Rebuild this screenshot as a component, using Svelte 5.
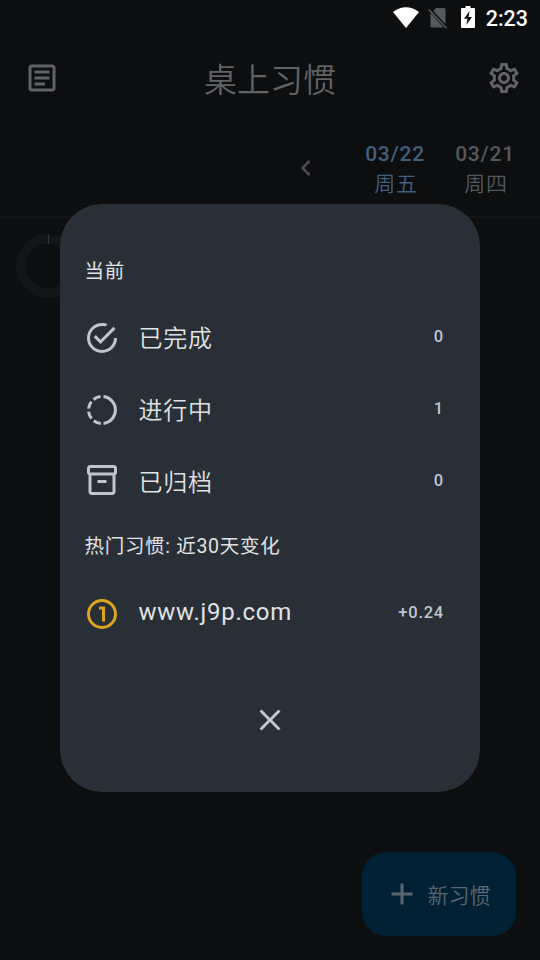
<script lang="ts">
  const days = [
    { date: '03/22', name: '周五', active: true },
    { date: '03/21', name: '周四', active: false },
  ];

  const stats = [
    { icon: 'done', label: '已完成', value: 0 },
    { icon: 'progress', label: '进行中', value: 1 },
    { icon: 'archive', label: '已归档', value: 0 },
  ];
</script>

<div class="screen">
  <div class="statusbar">
    <svg class="wifi" width="26" height="21" viewBox="0 0 26 21"><path d="M0 5C7.500-1.500 18.500-1.500 26 5L13 21z" fill="currentColor"/></svg>
    <svg class="sim" width="20" height="22" viewBox="0 0 20 22">
      <path d="M8 1h8q1.500 0 1.500 1.500V17L5.300 4zM2.500 6L15.500 20.500H4q-1.500 0-1.500-1.500z" fill="#57585a"/>
      <path d="M.7 2.500L18.500 21.300" stroke="#57585a" stroke-width="1.600"/>
    </svg>
    <svg class="battery" width="14" height="22" viewBox="0 0 14 22">
      <path d="M4.500 0h5v2H13q1 0 1 1v18q0 1-1 1H1q-1 0-1-1V3q0-1 1-1h3.500z" fill="currentColor"/>
      <path d="M8.600 5L3 12.700h3.500L5.300 19 11 11H7.500z" fill="#0c0e10"/>
    </svg>
    <span class="time">2:23</span>
  </div>

  <header class="topbar">
    <svg class="icon" viewBox="0 0 24 24"><path d="M19 5v14H5V5h14m0-2H5c-1.100 0-2 .9-2 2v14c0 1.100.9 2 2 2h14c1.100 0 2-.9 2-2V5c0-1.100-.9-2-2-2zM14 17H7v-2h7v2zm3-4H7v-2h10v2zm0-4H7V7h10v2z" fill="currentColor"/></svg>
    <h1>桌上习惯</h1>
    <svg class="icon" viewBox="0 0 24 24"><path d="M19.430 12.980c.04-.32.07-.64.07-.98 0-.34-.03-.66-.07-.98l2.110-1.650c.19-.15.24-.42.12-.64l-2-3.460c-.09-.16-.26-.25-.43-.25-.06 0-.12.01-.17.03l-2.490 1c-.52-.4-1.080-.73-1.690-.98l-.38-2.650C14.460 2.180 14.250 2 14 2h-4c-.25 0-.46.18-.49.42l-.38 2.650c-.61.25-1.170.59-1.690.98l-2.490-1c-.06-.02-.12-.03-.18-.03-.17 0-.34.09-.43.25l-2 3.460c-.13.22-.07.49.12.64l2.110 1.650c-.04.32-.07.65-.07.98 0 .33.03.66.07.98l-2.110 1.650c-.19.15-.24.42-.12.64l2 3.460c.09.16.26.25.43.25.06 0 .12-.01.17-.03l2.490-1c.52.4 1.080.73 1.690.98l.38 2.650c.03.24.24.42.49.42h4c.25 0 .46-.18.49-.42l.38-2.650c.61-.25 1.170-.59 1.690-.98l2.490 1c.06.02.12.03.18.03.17 0 .34-.09.43-.25l2-3.460c.12-.22.07-.49-.12-.64l-2.110-1.650zm-1.980-1.710c.04.31.05.52.05.73 0 .21-.02.43-.05.73l-.14 1.130.89.7 1.080.84-.7 1.210-1.270-.51-1.040-.42-.9.68c-.43.32-.84.56-1.250.73l-1.060.43-.16 1.130-.2 1.350h-1.400l-.19-1.350-.16-1.130-1.060-.43c-.43-.18-.83-.41-1.230-.71l-.91-.7-1.060.43-1.270.51-.7-1.210 1.080-.84.89-.7-.14-1.130c-.03-.31-.05-.54-.05-.74s.02-.43.05-.73l.14-1.130-.89-.7-1.080-.84.7-1.210 1.270.51 1.040.42.9-.68c.43-.32.84-.56 1.250-.73l1.060-.43.16-1.130.2-1.350h1.390l.19 1.350.16 1.130 1.060.43c.43.18.83.41 1.230.71l.91.7 1.060-.43 1.270-.51.7 1.210-1.070.85-.89.7.14 1.130zM12 8c-2.210 0-4 1.790-4 4s1.790 4 4 4 4-1.790 4-4-1.790-4-4-4zm0 6c-1.100 0-2-.9-2-2s.9-2 2-2 2 .9 2 2-.9 2-2 2z" fill="currentColor"/></svg>
  </header>

  <div class="days">
    <svg class="prev" viewBox="0 0 24 24"><path d="M15.410 7.410L14 6l-6 6 6 6 1.410-1.410L10.830 12z" fill="currentColor"/></svg>
    {#each days as day}
      <div class="day" class:active={day.active}>
        <span class="date">{day.date}</span>
        <span class="name">{day.name}</span>
      </div>
    {/each}
  </div>

  <main>
    <svg width="64" height="64" viewBox="0 0 64 64">
      <circle cx="32" cy="32" r="27" fill="none" stroke="#131517" stroke-width="10"/>
      <path d="M32.500 0v10" stroke="#30343e"/>
    </svg>
  </main>

  <button class="fab">
    <svg class="icon" viewBox="0 0 24 24"><path d="M19 13h-6v6h-2v-6H5v-2h6V5h2v6h6z" fill="currentColor"/></svg>
    <span>新习惯</span>
  </button>

  <div class="dialog">
    <h2>当前</h2>
    {#each stats as stat}
      <div class="row">
        <svg class="icon" viewBox="0 0 24 24">
          {#if stat.icon === 'done'}
            <path d="M20 12c0 4.400-3.600 8-8 8s-8-3.600-8-8 3.600-8 8-8c.76 0 1.500.11 2.200.31l1.570-1.570A9.820 9.820 0 0 0 12 2 10 10 0 1 0 22 12M7.910 10.080L6.500 11.500 11 16 21 6l-1.410-1.420L11 13.170z" fill="currentColor"/>
          {:else if stat.icon === 'progress'}
            <g fill="none" stroke="currentColor" stroke-width="2">
              <path d="M13 3.060a9 9 0 0 1 0 17.880"/>
              <path d="M12 3a9 9 0 0 0 0 18" stroke-dasharray="0 1 5.070 2 5.070 2 5.070 2 5.070 2"/>
            </g>
          {:else}
            <path transform="translate(0 -1.330)" d="M20 2H4c-1 0-2 .9-2 2v3.010c0 .72.43 1.340 1 1.690V20c0 1.100 1.100 2 2 2h14c.9 0 2-.9 2-2V8.700c.57-.35 1-.97 1-1.690V4c0-1.100-1-2-2-2zm-1 18H5V9h14v11zm1-13H4V4h16v3zM9 12h6v2H9z" fill="currentColor"/>
          {/if}
        </svg>
        <span class="label cjk">{stat.label}</span>
        <span class="value">{stat.value}</span>
      </div>
    {/each}
    <h2 class="hot">热门习惯: 近30天变化</h2>
    <div class="row">
      <svg class="icon gold" viewBox="0 0 24 24">
        <circle cx="12" cy="12" r="9" fill="none" stroke="currentColor" stroke-width="2"/>
        <path d="M10 7v2h2v8h2V7z" fill="currentColor"/>
      </svg>
      <span class="label">www.j9p.com</span>
      <span class="value">+0.24</span>
    </div>
    <button class="close" aria-label="关闭">
      <svg class="icon" viewBox="0 0 24 24"><path d="M19 6.410L17.590 5 12 10.590 6.410 5 5 6.410 10.590 12 5 17.590 6.410 19 12 13.410 17.590 19 19 17.590 13.410 12z" fill="currentColor"/></svg>
    </button>
  </div>
</div>

<style>
  :global(body) {
    margin: 0;
    background: #0c0e10;
  }

  .screen {
    position: relative;
    width: 540px;
    height: 960px;
    overflow: hidden;
    background: #0c0e10;
    color: #616264;
    font-family: Roboto, 'Noto Sans CJK SC', sans-serif;
  }

  h1, h2 {
    margin: 0;
    font-weight: 400;
  }

  button {
    padding: 0;
    border: none;
    background: none;
    font-family: inherit;
  }

  svg {
    display: block;
    flex-shrink: 0;
  }

  .icon {
    width: 36px;
    height: 36px;
  }

  .statusbar {
    display: flex;
    justify-content: flex-end;
    align-items: center;
    box-sizing: border-box;
    height: 36px;
    padding-right: 12px;
    color: #fff;
  }

  .wifi {
    margin-bottom: 1px;
  }

  .sim {
    margin-left: 9px;
  }

  .battery {
    margin: 0 11px 2px 13px;
  }

  .time {
    font-size: 21.5px;
    font-weight: 500;
    line-height: 36px;
    padding-top: 2px;
  }

  .topbar {
    display: flex;
    align-items: center;
    justify-content: space-between;
    height: 84px;
    padding: 0 18px 0 24px;
  }

  .topbar h1 {
    padding: 5px 6px 0 0;
    font-size: 33px;
    font-weight: 350;
    line-height: 48px;
  }

  .days {
    display: flex;
    justify-content: flex-end;
    align-items: center;
    box-sizing: border-box;
    height: 98px;
    padding-right: 10px;
    border-bottom: 2px solid #121416;
    color: #54595f;
  }

  .prev {
    width: 32px;
    height: 32px;
    margin-right: 28px;
    color: #4b4c4e;
  }

  .day {
    display: flex;
    flex-direction: column;
    align-items: center;
    width: 90px;
    padding-top: 1px;
    font-size: 21px;
    line-height: 30px;
    letter-spacing: 0.75px;
  }

  .date {
    font-weight: 500;
  }

  .name {
    padding-left: 2px;
    font-weight: 350;
  }

  .active {
    color: #40607c;
  }

  main {
    padding: 16px;
  }

  .fab {
    position: absolute;
    right: 24px;
    bottom: 24px;
    display: flex;
    align-items: center;
    width: 154px;
    height: 84px;
    padding-left: 22px;
    border-radius: 24px;
    background: #002133;
    color: #5c6670;
    font-size: 21px;
    font-weight: 350;
  }

  .fab span {
    margin-left: 7.5px;
  }

  .dialog {
    position: absolute;
    top: 204px;
    left: 60px;
    display: flex;
    flex-direction: column;
    box-sizing: border-box;
    width: 420px;
    height: 588px;
    padding: 50px 36px 0 24px;
    border-radius: 42px;
    background: #282f36;
    color: #e1e2e5;
  }

  h2 {
    height: 48px;
    padding-left: 0.5px;
    font-size: 19.5px;
    line-height: 36px;
    letter-spacing: 0.7px;
  }

  .hot {
    height: 49px;
    margin-top: 11px;
  }

  .row {
    display: flex;
    align-items: center;
    height: 72px;
  }

  .row .icon, .value, .close {
    color: #bfc6cf;
  }

  .row .gold {
    color: #dba520;
  }

  .label {
    flex: 1;
    margin: 0 0 4px 18.5px;
    font-size: 24px;
    letter-spacing: 0.75px;
  }

  .cjk {
    font-weight: 350;
  }

  .value {
    margin-bottom: 4px;
    font-size: 16.5px;
    font-weight: 500;
    letter-spacing: 0.75px;
  }

  .close {
    align-self: center;
    margin: 52px 0 0 12px;
  }
</style>
